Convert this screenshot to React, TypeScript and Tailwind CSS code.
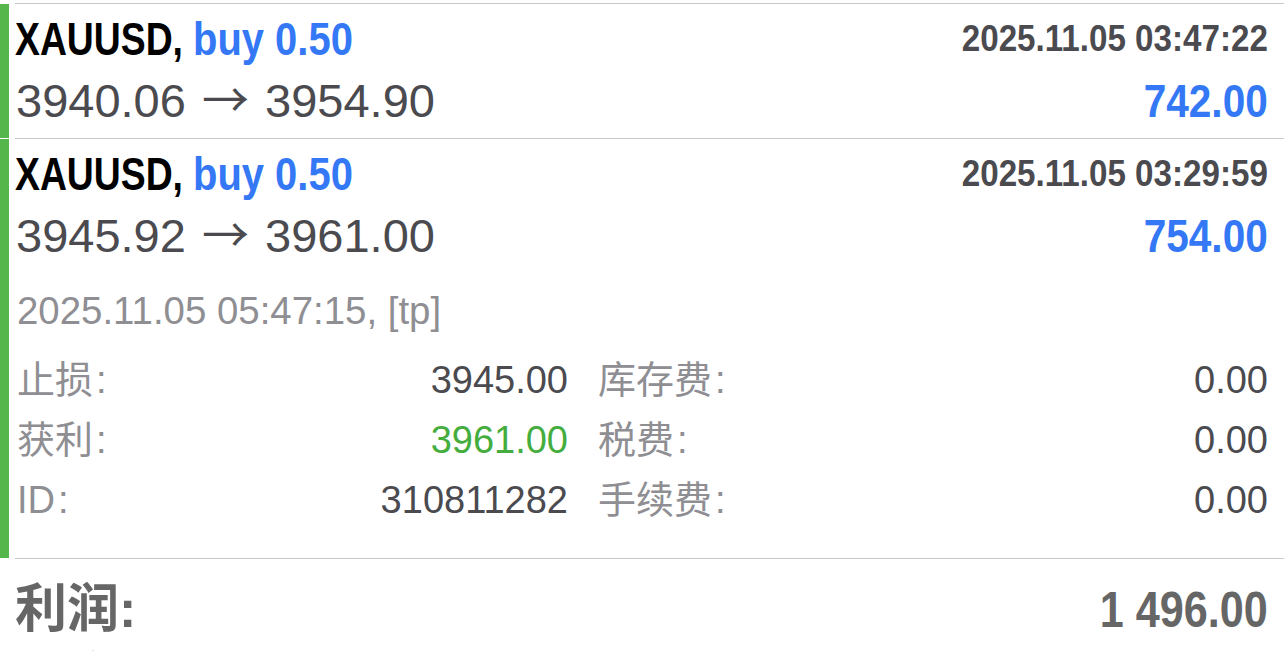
import React from "react";

const F = "font-['Liberation_Sans','Noto_Sans_CJK_SC',sans-serif]";

function DetailCell({
  label,
  value,
  valueClass,
}: {
  label: string;
  value: string;
  valueClass?: string;
}) {
  return (
    <div className="flex justify-between items-start h-[60px] whitespace-nowrap">
      <span className="text-[#8e8e93]">
        {label}
        <span className="ml-[3px]">:</span>
      </span>
      <span className={valueClass ?? "text-[#4a4a4f]"}>{value}</span>
    </div>
  );
}

function TradeRow({
  date,
  open,
  close,
  profit,
  expanded,
}: {
  date: string;
  open: string;
  close: string;
  profit: string;
  expanded?: boolean;
}) {
  return (
    <div className="flex">
      <div className="w-[9px] mt-[1px] bg-[#55b64b] shrink-0" />
      <div
        className={`ml-[6px] flex-1 border-t border-[#c8c7cc] pt-[4px] pr-[16px] ${
          expanded ? "pb-[28px]" : "pb-[6px]"
        }`}
      >
        <div className="flex justify-between items-start h-[62px] whitespace-nowrap">
          <div className="flex items-start text-[47px] leading-[62px] font-bold">
            <span className="inline-block origin-left scale-x-[0.794] text-black">XAUUSD,</span>
            <span className="inline-block origin-left scale-x-[0.85] ml-[-33.5px] text-[#3478f6]">
              buy 0.50
            </span>
          </div>
          <span className="inline-block origin-right scale-x-[0.88] text-[37.7px] leading-[60px] font-bold text-[#4a4a4f]">
            {date}
          </span>
        </div>
        <div className="flex justify-between items-start h-[62px] text-[47px] leading-[62px] whitespace-nowrap">
          <span className="text-[#4a4a4f] ml-[1px]">
            {open}{" "}
            <span className="font-['Noto_Sans_CJK_SC',sans-serif] leading-[0px] mx-[3px]">→</span>{" "}
            {close}
          </span>
          <span className="inline-block origin-right scale-x-[0.863] font-bold text-[#3478f6]">
            {profit}
          </span>
        </div>
        {expanded && (
          <div className="pl-[2px]">
            <div className="mt-[21px] h-[46px] text-[38.4px] leading-[46px] text-[#8e8e93] whitespace-nowrap">
              2025.11.05 05:47:15, [tp]
            </div>
            <div className="mt-[16px] grid grid-cols-[551px_1fr] gap-x-[30px] text-[38px] leading-[60px]">
              <DetailCell label="止损" value="3945.00" />
              <DetailCell label="库存费" value="0.00" />
              <DetailCell label="获利" value="3961.00" valueClass="text-[#45ad3e]" />
              <DetailCell label="税费" value="0.00" />
              <DetailCell label="ID" value="310811282" />
              <DetailCell label="手续费" value="0.00" />
            </div>
          </div>
        )}
      </div>
    </div>
  );
}

export default function App() {
  return (
    <div className={`w-[1284px] h-[651px] overflow-hidden bg-white pt-[3px] ${F}`}>
      <TradeRow date="2025.11.05 03:47:22" open="3940.06" close="3954.90" profit="742.00" />
      <TradeRow
        date="2025.11.05 03:29:59"
        open="3945.92"
        close="3961.00"
        profit="754.00"
        expanded
      />
      <div className="ml-[15px] border-t border-[#c8c7cc] pr-[16px] pt-[20px]">
        <div className="flex justify-between items-baseline leading-[60px] font-bold text-[#666666] whitespace-nowrap">
          <span className="text-[52px]">利润:</span>
          <span className="inline-block origin-right scale-x-[0.863] text-[50px]">1 496.00</span>
        </div>
        <div className="mt-[8px] text-[52px] leading-[60px] font-bold text-[#666666]">结余:</div>
      </div>
    </div>
  );
}
